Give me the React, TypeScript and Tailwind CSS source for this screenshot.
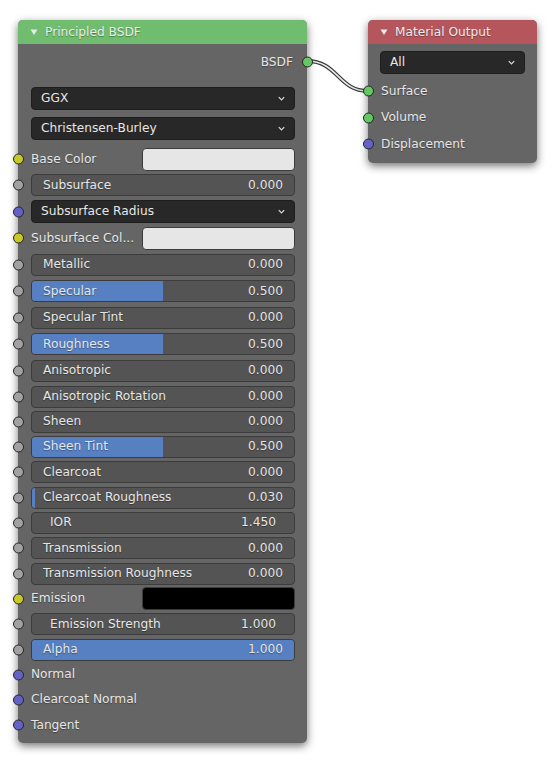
import React from "react";

type Kind = "yellow" | "gray" | "purple" | "green";

const SOCKET: Record<Kind, string> = {
  yellow: "bg-[#c7c729]",
  gray: "bg-[#a1a1a1]",
  purple: "bg-[#6363c7]",
  green: "bg-[#63c763]",
};

type Row =
  | { type: "color"; label: string; socket: Kind; h: string; swatch: string }
  | { type: "slider"; label: string; value: string; fill: number; h: string; inset?: boolean }
  | { type: "menu"; label: string; socket: Kind; h: string }
  | { type: "input"; label: string; socket: Kind; h: string };

const rows: Row[] = [
  { type: "color", label: "Base Color", socket: "yellow", h: "h-[26px]", swatch: "bg-[#e6e6e6]" },
  { type: "slider", label: "Subsurface", value: "0.000", fill: 0, h: "h-[26px]" },
  { type: "menu", label: "Subsurface Radius", socket: "purple", h: "h-[27px]" },
  { type: "color", label: "Subsurface Col...", socket: "yellow", h: "h-[26px]", swatch: "bg-[#e6e6e6]" },
  { type: "slider", label: "Metallic", value: "0.000", fill: 0, h: "h-[27px]" },
  { type: "slider", label: "Specular", value: "0.500", fill: 0.5, h: "h-[26px]" },
  { type: "slider", label: "Specular Tint", value: "0.000", fill: 0, h: "h-[27px]" },
  { type: "slider", label: "Roughness", value: "0.500", fill: 0.5, h: "h-[26px]" },
  { type: "slider", label: "Anisotropic", value: "0.000", fill: 0, h: "h-[27px]" },
  { type: "slider", label: "Anisotropic Rotation", value: "0.000", fill: 0, h: "h-[25px]" },
  { type: "slider", label: "Sheen", value: "0.000", fill: 0, h: "h-[25px]" },
  { type: "slider", label: "Sheen Tint", value: "0.500", fill: 0.5, h: "h-[25px]" },
  { type: "slider", label: "Clearcoat", value: "0.000", fill: 0, h: "h-[26px]" },
  { type: "slider", label: "Clearcoat Roughness", value: "0.030", fill: 0.012, h: "h-[25px]" },
  { type: "slider", label: "IOR", value: "1.450", fill: 0, h: "h-[25px]", inset: true },
  { type: "slider", label: "Transmission", value: "0.000", fill: 0, h: "h-[26px]" },
  { type: "slider", label: "Transmission Roughness", value: "0.000", fill: 0, h: "h-[25px]" },
  { type: "color", label: "Emission", socket: "yellow", h: "h-[25px]", swatch: "bg-black" },
  { type: "slider", label: "Emission Strength", value: "1.000", fill: 0, h: "h-[26px]", inset: true },
  { type: "slider", label: "Alpha", value: "1.000", fill: 1, h: "h-[25px]" },
  { type: "input", label: "Normal", socket: "purple", h: "h-[25px]" },
  { type: "input", label: "Clearcoat Normal", socket: "purple", h: "h-[25px]" },
  { type: "input", label: "Tangent", socket: "purple", h: "h-[26px]" },
];

const shadowText = "[text-shadow:0_1px_1px_rgba(0,0,0,0.35)]";

const Socket = ({ kind, side }: { kind: Kind; side: "left" | "right" }) => (
  <span
    className={`absolute top-1/2 -translate-y-1/2 w-[11px] h-[11px] rounded-full border border-[#262626] ${SOCKET[kind]} ${
      side === "left" ? "left-[-5.5px]" : "right-[-5.5px]"
    }`}
  />
);

const Chevron = () => (
  <svg viewBox="0 0 10 10" className="w-[9px] h-[9px]" fill="none" stroke="#d9d9d9" strokeWidth="1.4">
    <path d="M2 3.5 L5 6.5 L8 3.5" />
  </svg>
);

const Dropdown = ({ label, className }: { label: string; className: string }) => (
  <div
    className={`flex items-center justify-between rounded-[4px] bg-[#282828] border border-[#1e1e1e] pl-[9px] pr-[8px] text-[#e6e6e6] ${className}`}
  >
    <span>{label}</span>
    <Chevron />
  </div>
);

const Header = ({ title, color }: { title: string; color: string }) => (
  <div className={`h-[24px] flex items-center rounded-t-[5px] ${color} pl-[12px] gap-[7px] text-[#ececec] ${shadowText}`}>
    <svg viewBox="0 0 8 8" className="w-[8px] h-[8px]" fill="#e8e8e8">
      <path d="M0.5 1.5 L7.5 1.5 L4 7 Z" />
    </svg>
    <span>{title}</span>
  </div>
);

const NodeRow = ({ row }: { row: Row }) => {
  if (row.type === "slider") {
    return (
      <div className={`relative flex items-center pl-[13px] pr-[12px] ${row.h}`}>
        <Socket kind="gray" side="left" />
        <div className="relative flex-1 h-[22px] rounded-[4px] bg-[#545454] border border-[#3c3c3c] overflow-hidden">
          {row.fill > 0 && (
            <div className="absolute inset-y-0 left-0 bg-[#5680c2]" style={{ width: `${row.fill * 100}%` }} />
          )}
          <div
            className={`relative h-full flex items-center justify-between text-[#e6e6e6] ${shadowText} ${
              row.inset ? "pl-[18px] pr-[18px]" : "pl-[11px] pr-[11px]"
            }`}
          >
            <span>{row.label}</span>
            <span>{row.value}</span>
          </div>
        </div>
      </div>
    );
  }
  if (row.type === "color") {
    return (
      <div className={`relative flex items-center pl-[13px] pr-[12px] ${row.h}`}>
        <Socket kind={row.socket} side="left" />
        <span className={`w-[111px] text-[#e6e6e6] ${shadowText}`}>{row.label}</span>
        <div className={`flex-1 h-[23px] rounded-[4px] border border-[#3c3c3c] ${row.swatch}`} />
      </div>
    );
  }
  if (row.type === "menu") {
    return (
      <div className={`relative flex items-center pl-[13px] pr-[12px] ${row.h}`}>
        <Socket kind={row.socket} side="left" />
        <Dropdown label={row.label} className="flex-1 h-[23px]" />
      </div>
    );
  }
  return (
    <div className={`relative flex items-center pl-[13px] ${row.h}`}>
      <Socket kind={row.socket} side="left" />
      <span className={`text-[#e6e6e6] ${shadowText}`}>{row.label}</span>
    </div>
  );
};

export default function App() {
  return (
    <div className="relative w-[554px] h-[765px] bg-white overflow-hidden text-[12.2px] font-['DejaVu_Sans',sans-serif]">
      {/* link between nodes */}
      <svg className="absolute left-0 top-0 w-[554px] h-[765px]" viewBox="0 0 554 765">
        <path d="M307 61 C 338 61, 338 91, 368 91" fill="none" stroke="#3a3a3a" strokeWidth="4" />
        <path d="M307 61 C 338 61, 338 91, 368 91" fill="none" stroke="#e8e8e8" strokeWidth="1.6" />
      </svg>

      {/* Principled BSDF */}
      <div className="absolute left-[18px] top-[20px] w-[289px] rounded-[5px] bg-[#656565] shadow-[0_3px_8px_rgba(0,0,0,0.55)]">
        <Header title="Principled BSDF" color="bg-[#70bd70]" />
        <div className="flex flex-col pt-[5px] pb-[5px]">
          <div className={`relative h-[26px] flex items-center justify-end pr-[14px] text-[#e6e6e6] ${shadowText}`}>
            <span>BSDF</span>
            <Socket kind="green" side="right" />
          </div>
          <div className="px-[13px] pr-[12px] pt-[12px] flex flex-col gap-[7px]">
            <Dropdown label="GGX" className="h-[23px]" />
            <Dropdown label="Christensen-Burley" className="h-[23px]" />
          </div>
          <div className="flex flex-col pt-[6px]">
            {rows.map((row) => (
              <NodeRow key={row.label} row={row} />
            ))}
          </div>
        </div>
      </div>

      {/* Material Output */}
      <div className="absolute left-[368px] top-[20px] w-[169px] rounded-[5px] bg-[#656565] shadow-[0_3px_8px_rgba(0,0,0,0.55)]">
        <Header title="Material Output" color="bg-[#b5555c]" />
        <div className="flex flex-col pt-[7px] pb-[6px]">
          <div className="px-[12px]">
            <Dropdown label="All" className="h-[23px]" />
          </div>
          <div className="flex flex-col pt-[4px]">
            <NodeRow row={{ type: "input", label: "Surface", socket: "green", h: "h-[26px]" }} />
            <NodeRow row={{ type: "input", label: "Volume", socket: "green", h: "h-[27px]" }} />
            <NodeRow row={{ type: "input", label: "Displacement", socket: "purple", h: "h-[26px]" }} />
          </div>
        </div>
      </div>
    </div>
  );
}
